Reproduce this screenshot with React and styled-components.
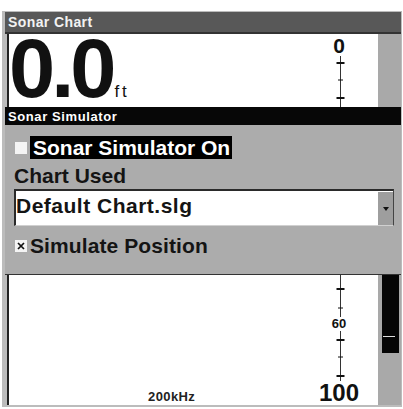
import React from "react"
import styled, { createGlobalStyle } from "styled-components"

const GlobalStyle = createGlobalStyle`
  body {
    margin: 0;
    background: #fff;
    font-family: "Liberation Sans", Arial, sans-serif;
  }
`

const topTicks = [
  { y: 7, big: true },
  { y: 24 },
  { y: 42, big: true },
  { y: 60 },
  { y: 78, big: true },
  { y: 233, big: true },
  { y: 252 },
]

const bottomTicks = [{ y: 9, big: true }, { y: 26 }, { y: 45, big: true }]

const Ruler = ({ height, ticks }) => (
  <RulerSvg width="30" height={height}>
    <line x1="16.5" y1="0" x2="16.5" y2={height} stroke="#333" strokeWidth="1" />
    {ticks.map((t, i) => (
      <line
        key={i}
        x1={t.big ? 12.5 : 14}
        x2={t.big ? 20.5 : 19}
        y1={t.y}
        y2={t.y}
        stroke="#111"
        strokeWidth={t.big ? 2 : 1}
      />
    ))}
  </RulerSvg>
)

const Checkbox = ({ checked }) => (
  <Box>
    {checked && (
      <CheckMark width="12" height="12">
        <path d="M3 3 L9 9 M9 3 L3 9" stroke="#111" strokeWidth="1.7" />
      </CheckMark>
    )}
  </Box>
)

const App = () => {
  return (
    <Page>
      <GlobalStyle />
      <Frame>
        <TitleBar>Sonar Chart</TitleBar>
        <ChartArea>
          <Plot>
            <Main>
              <Reading>
                <Digits>0.0</Digits>
                <Unit>ft</Unit>
              </Reading>
              <Freq>200kHz</Freq>
            </Main>
            <Scale>
              <ScaleLabel size={21} lh={21} top={1}>0</ScaleLabel>
              <Ruler height={261} ticks={topTicks} />
              <ScaleLabel size={13} lh={14}>60</ScaleLabel>
              <Ruler height={50} ticks={bottomTicks} />
              <ScaleLabel size={24} lh={24}>100</ScaleLabel>
            </Scale>
          </Plot>
          <Gauge>
            <Level offset={150} height={169}>
              <Marker />
            </Level>
          </Gauge>

          <Dialog>
            <DialogTitle>Sonar Simulator</DialogTitle>
            <DialogBody>
              <CheckRow>
                <Checkbox />
                <Highlight>Sonar Simulator On</Highlight>
              </CheckRow>
              <FieldLabel>Chart Used</FieldLabel>
              <Select>
                <SelectValue>Default Chart.slg</SelectValue>
                <SelectButton>
                  <Arrow />
                </SelectButton>
              </Select>
              <CheckRow spaced>
                <Checkbox checked />
                <OptionText>Simulate Position</OptionText>
              </CheckRow>
            </DialogBody>
          </Dialog>
        </ChartArea>
      </Frame>
    </Page>
  )
}

const Page = styled.div`
  padding: 11px 0 0 2px;
`

const Frame = styled.div`
  width: 400px;
  box-sizing: border-box;
  background: #bcbcbc;
  padding: 1px 1px 2px 3px;
`

const TitleBar = styled.div`
  height: 20px;
  padding-left: 3px;
  background: #585858;
  color: #f2f2f2;
  font-size: 14px;
  font-weight: bold;
  letter-spacing: 0.4px;
  line-height: 20px;
`

const ChartArea = styled.div`
  position: relative;
  display: flex;
  height: 371px;
  padding-left: 2px;
  border-top: 2px solid #333;
  background: #bcbcbc;
`

const Plot = styled.div`
  flex: 1;
  display: flex;
  border-left: 2px solid #222;
  background: #fff;
`

const Main = styled.div`
  flex: 1;
  display: flex;
  flex-direction: column;
  justify-content: space-between;
`

const Reading = styled.div`
  display: flex;
  align-items: baseline;
  margin-top: 5px;
  color: #111;
`

const Digits = styled.span`
  font-size: 83px;
  font-weight: bold;
  letter-spacing: -4px;
  line-height: 60px;
`

const Unit = styled.span`
  margin-left: 2px;
  font-size: 17px;
  letter-spacing: 3px;
  line-height: 17px;
`

const Freq = styled.div`
  align-self: flex-start;
  margin: 0 0 1px 139px;
  color: #222;
  font-size: 13px;
  font-weight: bold;
  letter-spacing: 0.4px;
  line-height: 14px;
`

const Scale = styled.div`
  width: 30px;
  margin-right: 24px;
  display: flex;
  flex-direction: column;
  align-items: center;
`

const ScaleLabel = styled.div`
  margin-top: ${({ top }) => top || 0}px;
  color: #111;
  font-size: ${({ size }) => size}px;
  font-weight: bold;
  line-height: ${({ lh }) => lh}px;
  white-space: nowrap;
`

const RulerSvg = styled.svg`
  display: block;
  flex: none;
`

const Gauge = styled.div`
  width: 23px;
  display: flex;
  flex-direction: column;
  background: #a9a9a9;
`

const Level = styled.div`
  margin: ${({ offset }) => offset}px 0 0 4px;
  width: 17px;
  height: ${({ height }) => height}px;
  display: flex;
  flex-direction: column;
  justify-content: flex-end;
  background: #050505;
`

const Marker = styled.div`
  width: 12px;
  height: 1px;
  margin: 0 0 16px 1px;
  background: #ddd;
`

const Dialog = styled.div`
  position: absolute;
  top: 73px;
  left: 0;
  right: 0;
`

const DialogTitle = styled.div`
  height: 18px;
  box-sizing: border-box;
  padding: 1px 0 0 3px;
  background: #070707;
  color: #fff;
  font-size: 13px;
  font-weight: bold;
  letter-spacing: 0.6px;
  line-height: 17px;
`

const DialogBody = styled.div`
  height: 150px;
  box-sizing: border-box;
  padding: 11px 7px 0 9px;
  background: #acacac;
  border-bottom: 1px solid #333;
  color: #141414;
  font-size: 21px;
  font-weight: bold;
  line-height: 23px;
`

const CheckRow = styled.div`
  display: flex;
  align-items: center;
  gap: 3px;
  margin-top: ${({ spaced }) => (spaced ? "8px" : "0")};
`

const Box = styled.div`
  width: 12px;
  height: 12px;
  margin-left: 1px;
  background: #f4f4f4;
  flex: none;
`

const CheckMark = styled.svg`
  display: block;
`

const Highlight = styled.span`
  padding: 0 2px 0 3px;
  background: #000;
  color: #fff;
`

const OptionText = styled.span`
  letter-spacing: 0.1px;
`

const FieldLabel = styled.div`
  margin-top: 5px;
`

const Select = styled.div`
  margin-top: 2px;
  height: 37px;
  box-sizing: border-box;
  display: flex;
  background: #fff;
  border-top: 2px solid #2a2a2a;
  border-left: 2px solid #2a2a2a;
  border-right: 1px solid #444;
  border-bottom: 1px solid #d0d0d0;
`

const SelectValue = styled.div`
  flex: 1;
  padding-top: 3px;
  letter-spacing: 0.5px;
`

const SelectButton = styled.div`
  width: 15px;
  margin-top: 1px;
  display: flex;
  align-items: center;
  justify-content: center;
  background: #9e9e9e;
`

const Arrow = styled.div`
  width: 0;
  height: 0;
  border-left: 3px solid transparent;
  border-right: 3px solid transparent;
  border-top: 4px solid #111;
`

export default App
